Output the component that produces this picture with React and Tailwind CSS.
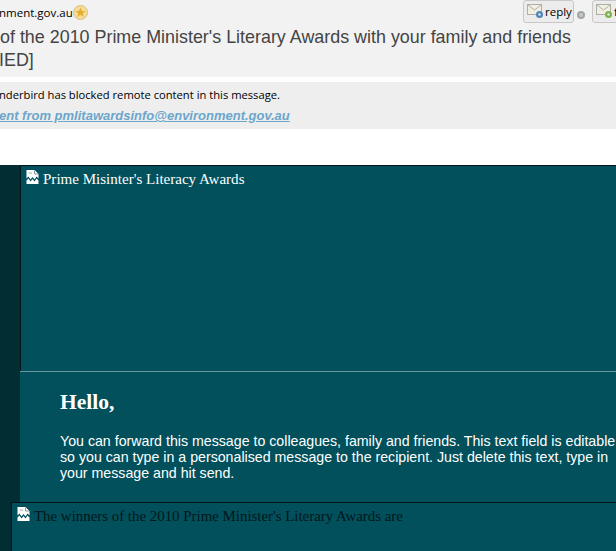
import React from 'react';

const BrokenImage = () => (
  <svg width="13" height="14" viewBox="0 0 13 14" className="shrink-0">
    <path d="M0.5 0H8.5L12.5 4V8.5L10.5 6.5L8.5 9.5L6.5 7L4.5 9.5L2.5 6.5L0.5 8.5Z" fill="#fff" />
    <path d="M0.5 10.5L2.5 8.5L4.5 11.5L6.5 9L8.5 11.5L10.5 8.5L12.5 10.5V14H0.5Z" fill="#fff" />
    <path d="M8.5 0.5V4H12" fill="none" stroke="#7f9da2" strokeWidth="1" />
    <path d="M2.5 2H6V4H2.5Z" fill="#c9d8da" />
  </svg>
);

const ReplyIcon = ({ dot }) => (
  <svg width="17" height="15" viewBox="0 0 17 15" className="shrink-0">
    <rect x="0.5" y="0.5" width="14" height="10" fill="#f1eee2" stroke="#aeaea4" />
    <path d="M1 1L7.5 6L14 1" fill="none" stroke="#aeaea4" />
    <circle cx="12.5" cy="10.5" r="3.5" fill={dot} />
    <circle cx="12.5" cy="10.5" r="1.2" fill="#dfe9f0" />
  </svg>
);

const App = () => {
  return (
    <div className="w-[616px] h-[551px] overflow-hidden bg-white flex flex-col">
      <div className="h-[77px] shrink-0 bg-[#f2f2f2] relative">
        <div className="h-[24px] flex items-center pt-px">
          <span className="text-[11.5px] leading-none text-black font-['Open_Sans',sans-serif] -ml-px">nment.gov.au</span>
          <svg width="15" height="15" viewBox="0 0 15 15" className="shrink-0">
            <circle cx="7.5" cy="7.5" r="7" fill="#f6dc9c" stroke="#e0bd74" />
            <path d="M7.5 2.5L9 6H12.5L9.7 8.2L10.8 12L7.5 9.8L4.2 12L5.3 8.2L2.5 6H6Z" fill="#e3ad2e" />
          </svg>
        </div>
        <div className="pt-[2px] text-[17.9px] leading-[23px] text-[#444] font-['Liberation_Sans',sans-serif] whitespace-nowrap">
          <div>of the 2010 Prime Minister's Literary Awards with your family and friends</div>
          <div className="-ml-[1px]">IED]</div>
        </div>
        <div className="absolute left-[523px] top-0 flex items-center gap-[3px]">
          <div className="h-[23px] w-[51px] rounded-[3px] border border-[#c8c8c8] bg-[#ececec] flex items-center pl-[3px] gap-px">
            <ReplyIcon dot="#4f86b8" />
            <span className="text-[11.5px] leading-none text-black font-['Open_Sans',sans-serif]">reply</span>
          </div>
          <span className="w-[8px] h-[8px] mt-[6px] rounded-full bg-[#c4c7c7] border-2 border-[#a2a6a6]" />
          <div className="h-[23px] w-[40px] ml-[4px] rounded-[3px] border border-[#c8c8c8] bg-[#ececec] flex items-center pl-[3px] gap-px">
            <ReplyIcon dot="#7db544" />
            <span className="text-[11.5px] leading-none text-black font-['Open_Sans',sans-serif]">f</span>
          </div>
        </div>
      </div>

      <div className="h-[5px] shrink-0" />

      <div className="h-[47px] shrink-0 bg-[#eeeeee] whitespace-nowrap">
        <div className="pt-[6px] text-[11.2px] leading-[14px] text-black font-['Open_Sans',sans-serif] -ml-px">nderbird has blocked remote content in this message.</div>
        <div className="pt-[6px] text-[13px] leading-[16px] font-bold italic underline text-[#6ca6cb] font-['Liberation_Sans',sans-serif] -ml-px">ent from pmlitawardsinfo@environment.gov.au</div>
      </div>

      <div className="h-[36px] shrink-0" />

      <div className="flex-1 bg-[#022d33] flex flex-col">
        <div className="ml-5 h-[206px] shrink-0 bg-[#01505c] border-t border-l border-[#01161a] flex items-start gap-[4px] pl-[5px] pt-[4px]">
          <BrokenImage />
          <span className="text-[15.05px] leading-[18px] text-white font-['Liberation_Serif',serif] whitespace-nowrap">Prime Misinter's Literacy Awards</span>
        </div>
        <div className="ml-5 h-px shrink-0 bg-[#6a979c]" />
        <div className="ml-5 h-[130px] shrink-0 bg-[#01505c] pl-10 pt-[18px]">
          <h1 className="text-[21.5px] leading-[25px] font-bold text-white font-['Liberation_Serif',serif]">Hello,</h1>
          <p className="mt-[18px] text-[14.2px] leading-[16px] text-white font-['Liberation_Sans',sans-serif] whitespace-nowrap">
            You can forward this message to colleagues, family and friends. This text field is editable<br />
            so you can type in a personalised message to the recipient. Just delete this text, type in<br />
            your message and hit send.
          </p>
        </div>
        <div className="ml-[11px] flex-1 bg-[#01505c] border-t border-l border-[#01161a] flex items-start gap-[4px] pl-[5px] pt-[4px]">
          <BrokenImage />
          <span className="text-[14.9px] leading-[18px] text-[#01161a] font-['Liberation_Serif',serif] whitespace-nowrap">The winners of the 2010 Prime Minister's Literary Awards are</span>
        </div>
      </div>
    </div>
  );
};

export default App;
